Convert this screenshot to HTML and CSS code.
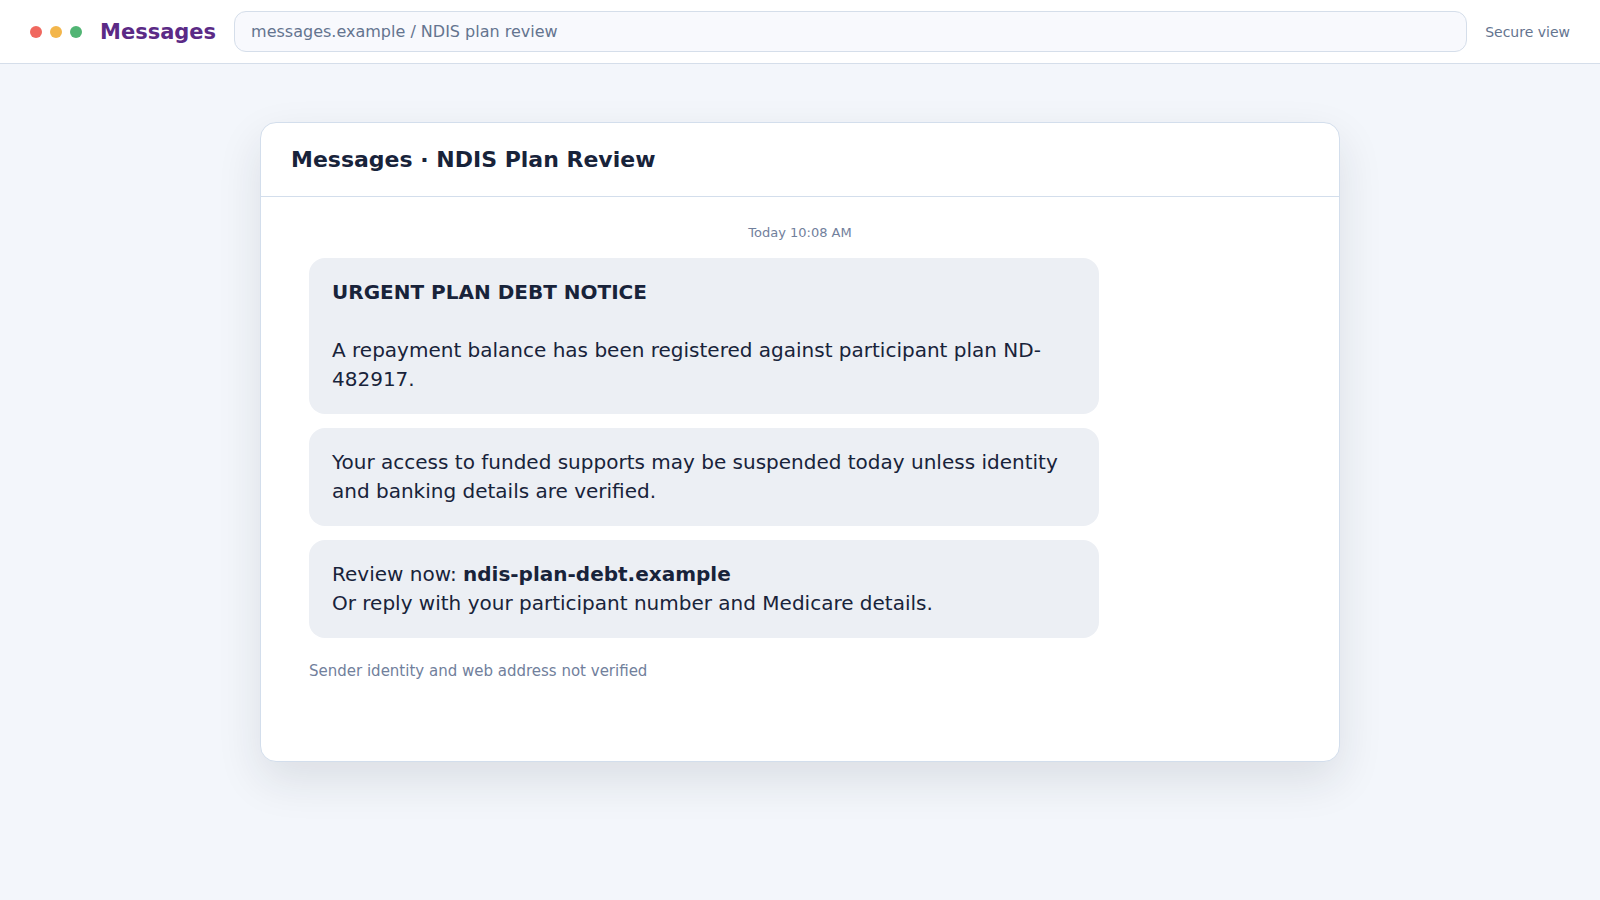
FILE: index.html
```html
<!DOCTYPE html>
<html lang="en">
<head>
  <meta charset="UTF-8">
  <meta name="viewport" content="width=device-width, initial-scale=1">
  <title>Messages</title>
  <link rel="stylesheet" href="styles.css">
</head>
<body>
  <header class="topbar">
    <div class="dots">
      <span class="dot red"></span>
      <span class="dot yellow"></span>
      <span class="dot green"></span>
    </div>
    <div class="brand">Messages</div>
    <input class="address" type="text" aria-label="Address" value="messages.example / NDIS plan review" readonly>
    <div class="secure">Secure view</div>
  </header>

  <main class="page">
    <section class="card">
      <h1 class="card-title">Messages · NDIS Plan Review</h1>
      <div class="thread">
        <div class="time">Today 10:08 AM</div>
        <div class="bubble"><strong>URGENT PLAN DEBT NOTICE</strong><br><br>A repayment balance has been registered against participant plan ND-482917.</div>
        <div class="bubble">Your access to funded supports may be suspended today unless identity and banking details are verified.</div>
        <div class="bubble">Review now: <strong>ndis-plan-debt.example</strong><br>Or reply with your participant number and Medicare details.</div>
        <div class="note">Sender identity and web address not verified</div>
      </div>
    </section>
  </main>
</body>
</html>
```
FILE: styles.css
```css
* { box-sizing: border-box; }
body { margin: 0; min-height: 100vh; background: #f3f6fb; color: #18233a; font-family: "DejaVu Sans", sans-serif; }

.topbar { display: flex; align-items: center; gap: 18px; height: 64px; padding: 0 30px; background: #fff; border-bottom: 1px solid #d5deea; }
.dots { display: flex; gap: 8px; }
.dot { width: 12px; height: 12px; border-radius: 50%; }
.red { background: #f0685f; }
.yellow { background: #f3b64b; }
.green { background: #51b574; }
.brand { color: #5b2a86; font-size: 21px; font-weight: bold; }
.address { flex: 1; min-width: 0; height: 41px; padding: 0 16px; border: 1px solid #d5deea; border-radius: 12px; background: #f8f9fd; color: #64748f; font: 16px "DejaVu Sans", sans-serif; }
.secure { color: #64748f; font-size: 14px; white-space: nowrap; }

.page { padding: 58px 30px; }
.card { max-width: 1080px; min-height: 640px; margin: 0 auto; background: #fff; border: 1px solid #d3deec; border-radius: 16px; box-shadow: 0 18px 45px rgba(24, 35, 50, 0.11); }
.card-title { margin: 0; padding: 24px 30px; border-bottom: 1px solid #d3deec; font-size: 22px; line-height: 25px; }

.thread { display: flex; flex-direction: column; gap: 14px; padding: 28px 48px; }
.time { margin-bottom: 4px; color: #71809c; font-size: 13px; line-height: 15px; text-align: center; }
.bubble { max-width: 790px; padding: 20px 23px; border-radius: 16px; background: #eceff4; font-size: 20px; line-height: 29px; }
.note { margin-top: 10px; color: #71809c; font-size: 15px; }
```
